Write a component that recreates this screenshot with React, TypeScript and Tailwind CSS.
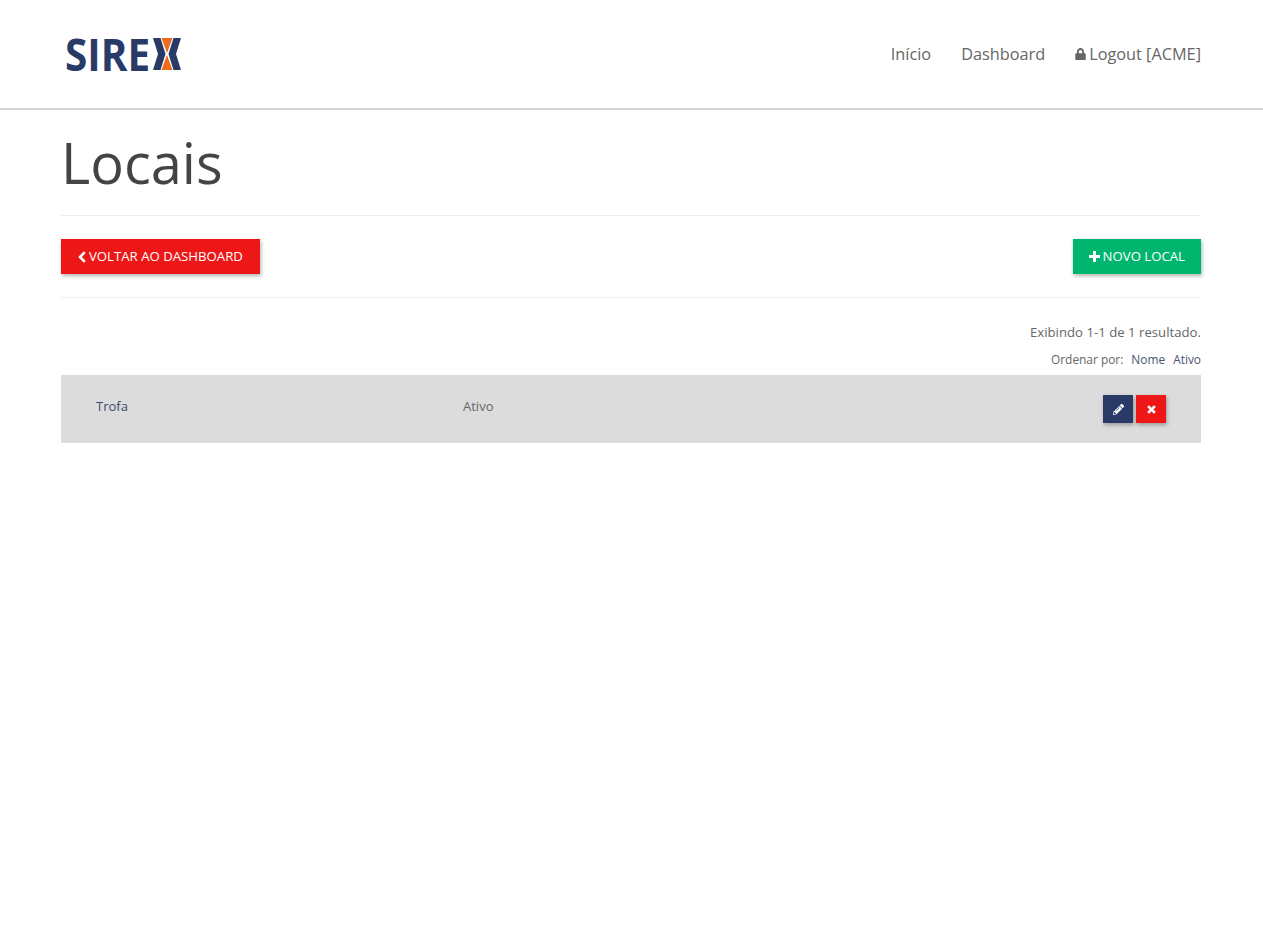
import React from "react";
import { FaLock, FaPencilAlt } from "react-icons/fa";

const NAVY = "#2a3a66";

const Logo: React.FC = () => (
  <div className="flex items-center h-[36px] w-[120px] text-[#2a3a66] font-['Open_Sans',sans-serif]">
    <span className="block w-[88px] origin-left scale-x-[0.92] text-[44px] font-bold leading-none">SIRE</span>
    <svg viewBox="0 0 28 32" className="w-[28px] h-[32px] shrink-0">
      <path d="M0 0h7.500l5 16-5 16H0l5-16z" fill={NAVY} />
      <path d="M28 0h-7.500l-5 16 5 16H28l-5-16z" fill={NAVY} />
      <path d="M8.500 0h11L14 15z" fill="#ee6a1f" />
      <path d="M8.500 32h11L14 17z" fill="#ee6a1f" />
    </svg>
  </div>
);

const ChevronLeft = () => (
  <svg viewBox="0 0 10 12" className="w-[10px] h-[12px]" fill="none" stroke="currentColor" strokeWidth="2.600">
    <path d="M7.800 1.200 3 6l4.800 4.800" />
  </svg>
);

const Plus = () => (
  <svg viewBox="0 0 11 11" className="w-[11px] h-[11px]" fill="currentColor">
    <path d="M4 0h3v4h4v3H7v4H4V7H0V4h4z" />
  </svg>
);

const Cross = () => (
  <svg viewBox="0 0 10 10" className="w-[9px] h-[9px]" fill="none" stroke="currentColor" strokeWidth="3">
    <path d="M1.200 1.200l7.600 7.600M8.800 1.200 1.200 8.800" />
  </svg>
);

const App: React.FC = () => {
  return (
    <div className="min-h-[933px] bg-white font-['Open_Sans',sans-serif] text-[#666]">
      <header className="h-[110px] border-b-2 border-[#d4d4d4] bg-white">
        <div className="ml-[61px] flex h-[108px] w-[1140px] items-center justify-between">
          <div className="pl-[4px]">
            <Logo />
          </div>
          <nav className="flex items-center gap-[30px] text-[16.300px] text-[#666]">
            <a>Início</a>
            <a>Dashboard</a>
            <a className="flex items-center gap-[3px]">
              <FaLock className="w-[11px] h-[12px] text-[#666]" />
              Logout [ACME]
            </a>
          </nav>
        </div>
      </header>

      <main className="ml-[61px] w-[1140px]">
        <h1 className="h-[106px] border-b border-[#eee] pt-[11px] text-[56px] leading-[82px] font-normal text-[#444]">
          Locais
        </h1>

        <div className="flex items-center justify-between border-b border-[#eee] pt-[23px] pb-[23px]">
          <button className="flex h-[35px] items-center gap-[2px] bg-[#ee1717] pl-[16px] pr-[17px] text-[13.200px] font-medium text-white shadow-[1px_2px_4px_rgba(0,0,0,0.3)]">
            <ChevronLeft />
            VOLTAR AO DASHBOARD
          </button>
          <button className="flex h-[35px] items-center gap-[3px] bg-[#00b66f] px-[16px] text-[13.200px] font-medium text-white shadow-[1px_2px_4px_rgba(0,0,0,0.3)]">
            <Plus />
            NOVO LOCAL
          </button>
        </div>

        <p className="mt-[25px] text-right text-[13.200px] leading-[18px] text-[#666]">
          Exibindo 1-1 de 1 resultado.
        </p>
        <div className="mt-[10px] flex justify-end gap-[8px] text-[11.900px] leading-[17px] text-[#666]">
          <span>Ordenar por:</span>
          <span className="text-[#4a5570]">Nome</span>
          <span className="text-[#4a5570]">Ativo</span>
        </div>

        <div className="mt-[7px] flex h-[68px] bg-[#dcdcdc] pl-[35px] pr-[35px] pt-[20px] text-[13px]">
          <div className="w-[367px] leading-[22px] text-[#3f4a68]">Trofa</div>
          <div className="flex-1 leading-[22px] text-[#666]">Ativo</div>
          <div className="flex gap-[3px]">
            <button className="flex h-[28px] w-[30px] items-center justify-center bg-[#2a3a66] text-white shadow-[1px_2px_4px_rgba(0,0,0,0.3)]">
              <FaPencilAlt className="w-[11px] h-[11px]" />
            </button>
            <button className="flex h-[28px] w-[30px] items-center justify-center bg-[#ee1717] text-white shadow-[1px_2px_4px_rgba(0,0,0,0.3)]">
              <Cross />
            </button>
          </div>
        </div>
      </main>
    </div>
  );
};

export default App;
